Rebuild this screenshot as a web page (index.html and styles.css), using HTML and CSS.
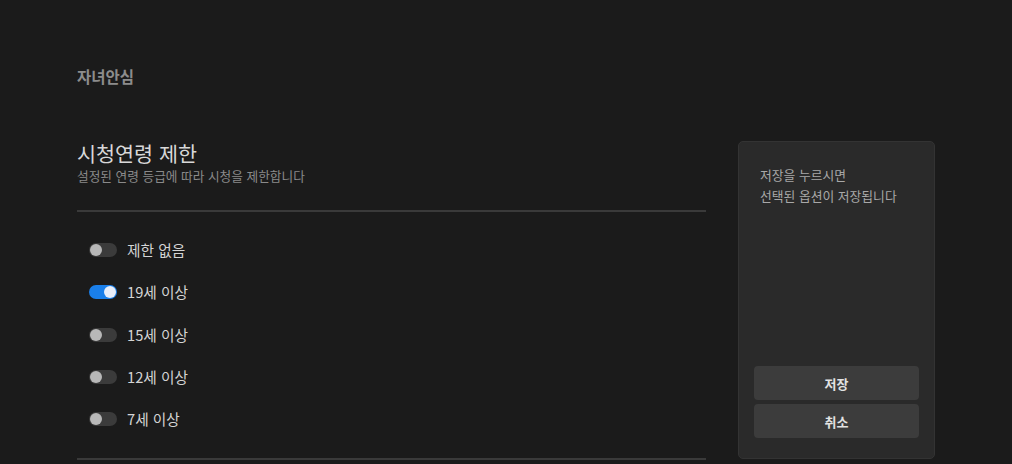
FILE: index.html
```html
<!DOCTYPE html>
<html lang="ko">
<head>
<meta charset="utf-8">
<title>자녀안심</title>
<link rel="stylesheet" href="styles.css">
</head>
<body>
<div class="page">
  <h1 class="page-title">자녀안심</h1>
  <div class="layout">
    <section class="main">
      <h2 class="section-title">시청연령 제한</h2>
      <p class="section-desc">설정된 연령 등급에 따라 시청을 제한합니다</p>
      <div class="options">
        <div class="option"><span class="toggle"><span class="knob"></span></span><span class="label">제한 없음</span></div>
        <div class="option"><span class="toggle on"><span class="knob"></span></span><span class="label">19세 이상</span></div>
        <div class="option"><span class="toggle"><span class="knob"></span></span><span class="label">15세 이상</span></div>
        <div class="option"><span class="toggle"><span class="knob"></span></span><span class="label">12세 이상</span></div>
        <div class="option"><span class="toggle"><span class="knob"></span></span><span class="label">7세 이상</span></div>
      </div>
    </section>
    <aside class="panel">
      <p class="panel-text">저장을 누르시면<br>선택된 옵션이 저장됩니다</p>
      <div class="buttons">
        <button class="btn">저장</button>
        <button class="btn">취소</button>
      </div>
    </aside>
  </div>
</div>
</body>
</html>
```
FILE: styles.css
```css
html, body {
  margin: 0;
  padding: 0;
  background: #1b1b1b;
  font-family: "Noto Sans CJK KR", "Noto Sans", sans-serif;
  height: 100%;
  overflow: hidden;
}
.page {
  padding: 66px 0 0 77px;
}
.page-title {
  margin: 0;
  font-size: 15.5px;
  line-height: 20px;
  font-weight: 700;
  color: #8c8c8c;
}
.layout {
  display: flex;
  gap: 32px;
  margin-top: 55px;
}
.main {
  width: 629px;
}
.section-title {
  margin: 0;
  font-size: 20.7px;
  line-height: 24px;
  font-weight: 400;
  color: #d8d8d8;
}
.section-desc {
  margin: 2px 0 0;
  font-size: 12.7px;
  line-height: 18px;
  color: #8a8a8a;
  padding-bottom: 25px;
  border-bottom: 2px solid #3a3a3a;
}
.options {
  padding: 17px 0 18px 12px;
  border-bottom: 2px solid #3a3a3a;
}
.option {
  display: flex;
  align-items: center;
  gap: 10px;
  height: 42.25px;
}
.toggle {
  position: relative;
  width: 28px;
  height: 14px;
  border-radius: 7px;
  background: #3b3b3b;
  flex: none;
}
.knob {
  position: absolute;
  top: 1px;
  left: 1px;
  width: 12px;
  height: 12px;
  border-radius: 50%;
  background: #b8b8b8;
}
.toggle.on {
  background: #1a7fea;
}
.toggle.on .knob {
  left: auto;
  right: 1px;
  background: #e8eefa;
}
.label {
  font-size: 14.7px;
  line-height: 20px;
  color: #d4d4d4;
}
.panel {
  width: 197px;
  height: 318px;
  box-sizing: border-box;
  background: #2a2a2a;
  border: 1px solid #333333;
  border-radius: 5px;
  padding: 22px 15px 20px;
  display: flex;
  flex-direction: column;
  justify-content: space-between;
}
.panel-text {
  margin: 0;
  padding-left: 6px;
  font-size: 12.8px;
  line-height: 21px;
  color: #a8a8a8;
}
.buttons {
  display: flex;
  flex-direction: column;
  gap: 4px;
}
.btn {
  height: 34px;
  border: none;
  border-radius: 4px;
  background: #3c3c3c;
  color: #e2e2e2;
  font-family: "Noto Sans CJK KR", "Noto Sans", sans-serif;
  font-size: 13px;
  font-weight: 700;
  padding: 0;
}
```
